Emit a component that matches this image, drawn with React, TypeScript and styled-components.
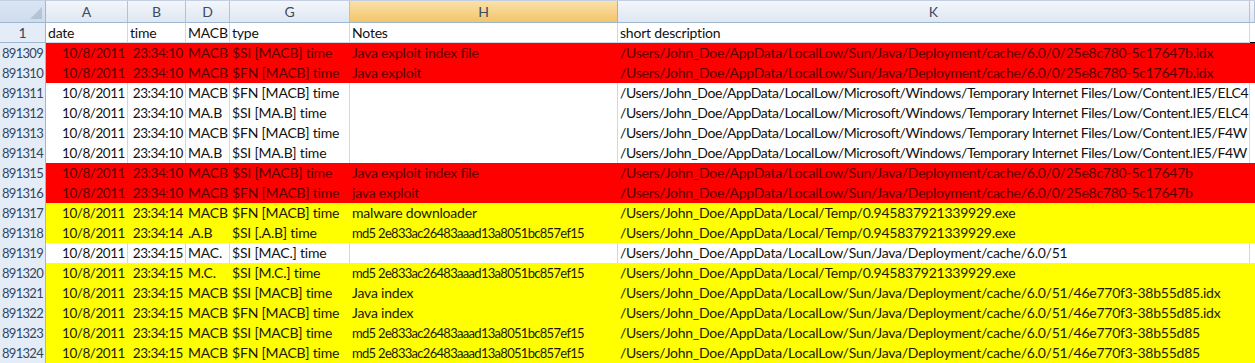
import React from "react";
import styled, { createGlobalStyle } from "styled-components";

const GlobalStyle = createGlobalStyle`
  html, body { margin: 0; padding: 0; background: #ffffff; overflow: hidden; }
  body { font-family: Lato, "Liberation Sans", sans-serif; }
`;

const COLS = "46px 82px 58px 44px 120px 268px 632px 1fr";

const Sheet = styled.div`
  width: 1255px;
  height: 363px;
  overflow: hidden;
  display: flex;
  flex-direction: column;
  font-family: Lato, "Liberation Sans", sans-serif;
  font-size: 14px;
  letter-spacing: -0.2px;
`;

const HeaderBar = styled.div`
  display: grid;
  grid-template-columns: ${COLS};
  height: 23px;
  box-sizing: border-box;
  border-top: 1px solid #c3d0e1;
  border-bottom: 1px solid #9eb6ce;
  background: linear-gradient(#f3f6fb, #dfe7f2);
`;

const Corner = styled.div`
  position: relative;
  box-sizing: border-box;
  border-right: 1px solid #9eb6ce;
  background: linear-gradient(#dbe5f3, #cfdcee);
`;

const CornerTriangle = styled.div`
  position: absolute;
  right: 3px;
  bottom: 3px;
  width: 0;
  height: 0;
  border-left: 12px solid transparent;
  border-bottom: 12px solid #b5c3d6;
`;

const ColHead = styled.div<{ $selected?: boolean }>`
  box-sizing: border-box;
  display: flex;
  align-items: center;
  justify-content: center;
  color: #3a4b63;
  font-size: 14px;
  letter-spacing: 0;
  border-right: 1px solid ${(p) => (p.$selected ? "#e2a94c" : "#b2c3d8")};
  background: ${(p) =>
    p.$selected ? "linear-gradient(#fbe0a9, #f3c56c)" : "transparent"};
`;

const Row = styled.div<{ $fill: string; $frozen?: boolean }>`
  display: grid;
  grid-template-columns: ${COLS};
  height: 20px;
  flex: none;
  box-sizing: border-box;
  background: ${(p) => p.$fill};
  border-bottom: ${(p) => (p.$frozen ? "1px solid #000000" : "none")};
`;

const RowHead = styled.div<{ $center?: boolean }>`
  box-sizing: border-box;
  background: #e4ecf7;
  border-right: 1px solid #9eb6ce;
  border-bottom: 1px solid #9eb6ce;
  color: #33465f;
  display: flex;
  align-items: center;
  justify-content: ${(p) => (p.$center ? "center" : "flex-end")};
  padding-right: ${(p) => (p.$center ? "0" : "2px")};
  font-size: ${(p) => (p.$center ? "14px" : "13px")};
  letter-spacing: ${(p) => (p.$center ? "0" : "-0.7px")};
  line-height: 19px;
`;

type Fit = "text" | "num" | "hex" | "path" | "longPath";

const SIZE: Record<Fit, string> = { text: "14px", num: "13.5px", hex: "13px", path: "14px", longPath: "14px" };
const SPACE: Record<Fit, string> = {
  text: "-0.2px",
  num: "-0.45px",
  hex: "-0.7px",
  path: "-0.25px",
  longPath: "-0.4px",
};

const Cell = styled.div<{ $grid: boolean; $right?: boolean; $ink: string; $spill?: boolean; $fit?: Fit }>`
  box-sizing: border-box;
  border-right: 1px solid ${(p) => (p.$grid ? "#d0d7e5" : "transparent")};
  border-bottom: 1px solid ${(p) => (p.$grid ? "#d0d7e5" : "transparent")};
  color: ${(p) => p.$ink};
  white-space: nowrap;
  overflow: ${(p) => (p.$spill ? "visible" : "hidden")};
  text-align: ${(p) => (p.$right ? "right" : "left")};
  font-size: ${(p) => SIZE[p.$fit ?? "text"]};
  letter-spacing: ${(p) => SPACE[p.$fit ?? "text"]};
  padding: 0 2px 0 2px;
  line-height: 20px;
  min-width: 0;
`;

type Kind = "red" | "yellow" | "white";

const FILL: Record<Kind, string> = {
  red: "#fe0000",
  yellow: "#ffff00",
  white: "#ffffff",
};
const INK: Record<Kind, string> = {
  red: "#5c0000",
  yellow: "#1a1a00",
  white: "#111111",
};

type Rec = {
  n: number;
  kind: Kind;
  time: string;
  macb: string;
  type: string;
  note: string;
  desc: string;
};

const JAVA0 = "/Users/John_Doe/AppData/LocalLow/Sun/Java/Deployment/cache/6.0/0/25e8c780-5c17647b";
const IE = "/Users/John_Doe/AppData/LocalLow/Microsoft/Windows/Temporary Internet Files/Low/Content.IE5/";
const TEMP = "/Users/John_Doe/AppData/Local/Temp/0.945837921339929.exe";
const JAVA51 = "/Users/John_Doe/AppData/LocalLow/Sun/Java/Deployment/cache/6.0/51";
const MD5 = "md5 2e833ac26483aaad13a8051bc857ef15";

const rows: Rec[] = [
  { n: 891309, kind: "red", time: "23:34:10", macb: "MACB", type: "$SI [MACB] time", note: "Java exploit index file", desc: JAVA0 + ".idx" },
  { n: 891310, kind: "red", time: "23:34:10", macb: "MACB", type: "$FN [MACB] time", note: "Java exploit", desc: JAVA0 + ".idx" },
  { n: 891311, kind: "white", time: "23:34:10", macb: "MACB", type: "$FN [MACB] time", note: "", desc: IE + "ELC4" },
  { n: 891312, kind: "white", time: "23:34:10", macb: "MA.B", type: "$SI [MA.B] time", note: "", desc: IE + "ELC4" },
  { n: 891313, kind: "white", time: "23:34:10", macb: "MACB", type: "$FN [MACB] time", note: "", desc: IE + "F4W" },
  { n: 891314, kind: "white", time: "23:34:10", macb: "MA.B", type: "$SI [MA.B] time", note: "", desc: IE + "F4W" },
  { n: 891315, kind: "red", time: "23:34:10", macb: "MACB", type: "$SI [MACB] time", note: "Java exploit index file", desc: JAVA0 },
  { n: 891316, kind: "red", time: "23:34:10", macb: "MACB", type: "$FN [MACB] time", note: "java exploit", desc: JAVA0 },
  { n: 891317, kind: "yellow", time: "23:34:14", macb: "MACB", type: "$FN [MACB] time", note: "malware downloader", desc: TEMP },
  { n: 891318, kind: "yellow", time: "23:34:14", macb: ".A.B", type: "$SI [.A.B] time", note: MD5, desc: TEMP },
  { n: 891319, kind: "white", time: "23:34:15", macb: "MAC.", type: "$SI [MAC.] time", note: "", desc: JAVA51 },
  { n: 891320, kind: "yellow", time: "23:34:15", macb: "M.C.", type: "$SI [M.C.] time", note: MD5, desc: TEMP },
  { n: 891321, kind: "yellow", time: "23:34:15", macb: "MACB", type: "$SI [MACB] time", note: "Java index", desc: JAVA51 + "/46e770f3-38b55d85.idx" },
  { n: 891322, kind: "yellow", time: "23:34:15", macb: "MACB", type: "$FN [MACB] time", note: "Java index", desc: JAVA51 + "/46e770f3-38b55d85.idx" },
  { n: 891323, kind: "yellow", time: "23:34:15", macb: "MACB", type: "$SI [MACB] time", note: MD5, desc: JAVA51 + "/46e770f3-38b55d85" },
  { n: 891324, kind: "yellow", time: "23:34:15", macb: "MACB", type: "$FN [MACB] time", note: MD5, desc: JAVA51 + "/46e770f3-38b55d85" },
];

const letters = ["A", "B", "D", "G", "H", "K", ""];

export default function App() {
  return (
    <>
      <GlobalStyle />
      <Sheet>
        <HeaderBar>
          <Corner>
            <CornerTriangle />
          </Corner>
          {letters.map((l, i) => (
            <ColHead key={i} $selected={l === "H"}>
              {l}
            </ColHead>
          ))}
        </HeaderBar>
        <Row $fill="#ffffff" $frozen>
          <RowHead $center>1</RowHead>
          {["date", "time", "MACB", "type", "Notes", "short description", ""].map((t, i) => (
            <Cell key={i} $grid={i < 6} $ink="#111111">
              {t}
            </Cell>
          ))}
        </Row>
        {rows.map((r) => {
          const g = r.kind === "white";
          const ink = INK[r.kind];
          return (
            <Row key={r.n} $fill={FILL[r.kind]}>
              <RowHead>{r.n}</RowHead>
              <Cell $grid={g} $ink={ink} $right $fit="num">10/8/2011</Cell>
              <Cell $grid={g} $ink={ink} $right $fit="num">{r.time}</Cell>
              <Cell $grid={g} $ink={ink}>{r.macb}</Cell>
              <Cell $grid={g} $ink={ink}>{r.type}</Cell>
              <Cell $grid={g} $ink={ink} $fit={r.note.startsWith("md5") ? "hex" : "text"}>{r.note}</Cell>
              <Cell $grid={g} $ink={ink} $spill $fit={r.desc.includes("Content.IE5") ? "longPath" : "path"}>
                {r.desc}
              </Cell>
              <Cell $grid={false} $ink={ink} />
            </Row>
          );
        })}
      </Sheet>
    </>
  );
}
